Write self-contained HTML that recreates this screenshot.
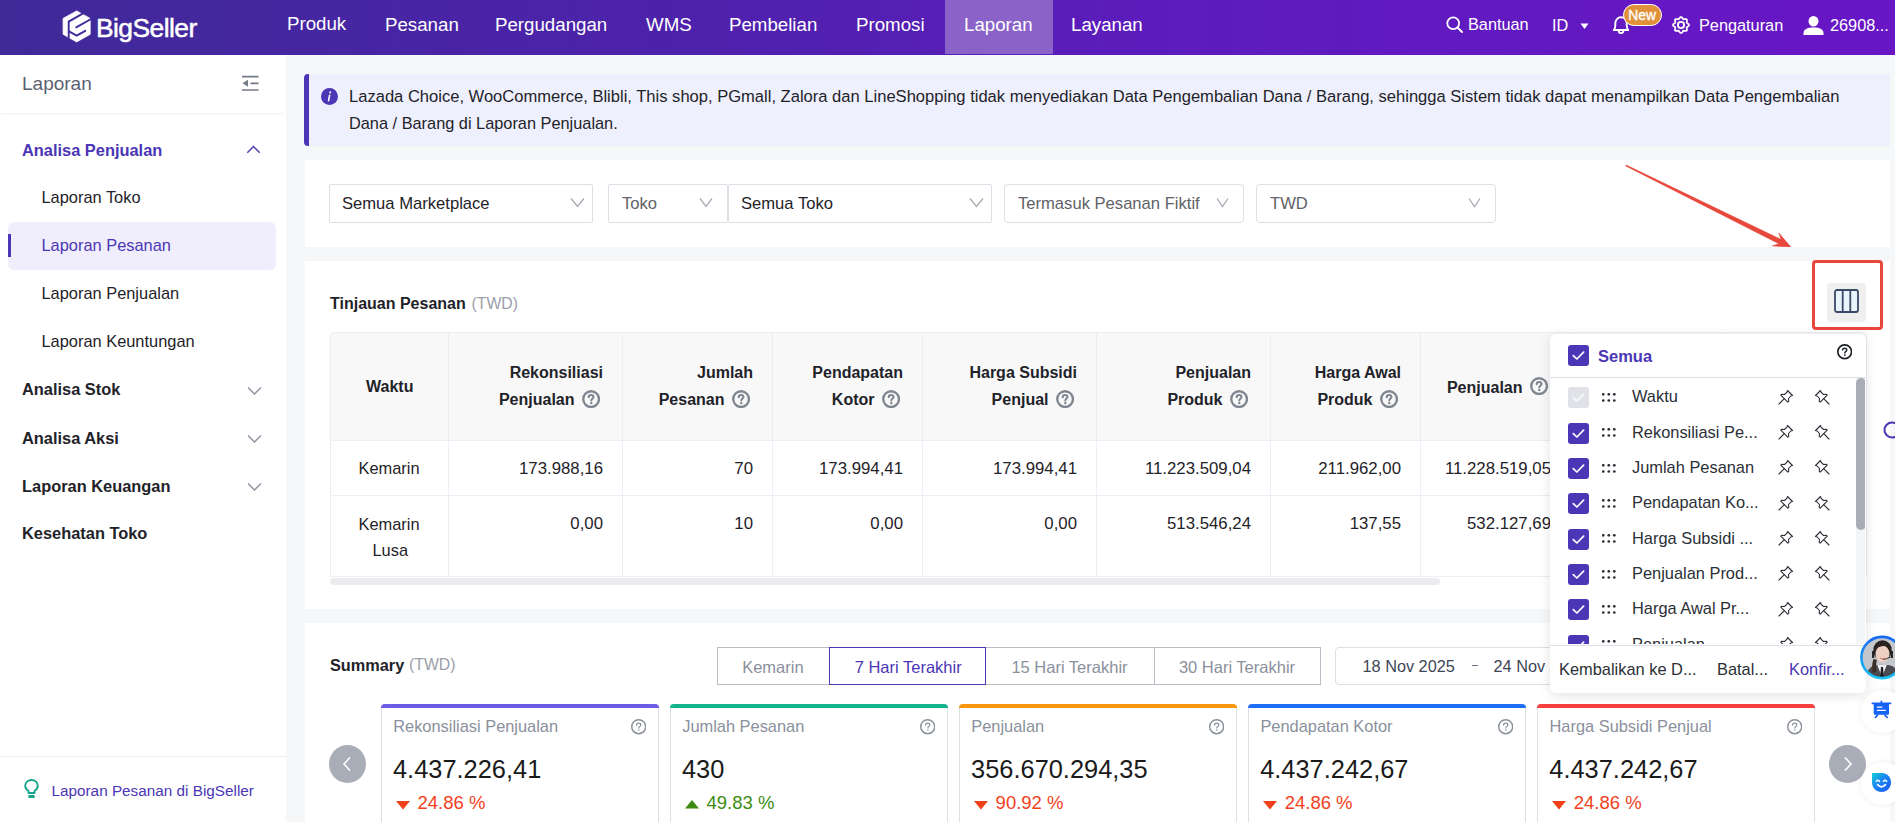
<!DOCTYPE html>
<html><head><meta charset="utf-8">
<style>
*{box-sizing:border-box;margin:0;padding:0}
html,body{width:1895px;height:822px;overflow:hidden}
body{position:relative;background:#f6f7f9;font-family:"Liberation Sans",sans-serif;color:#1f2329}
.a{position:absolute}
.t{position:absolute;line-height:1;white-space:nowrap}
#hdr{left:0;top:0;width:1895px;height:55px;background:linear-gradient(90deg,#3f2a98 0%,#4d22ab 35%,#5c1cbc 60%,#6816c6 100%)}
.nav{color:#fff;font-size:18.7px}
.hr{color:#fff;font-size:16.3px}
#side{left:0;top:55px;width:286px;height:767px;background:#fff}
.sb{font-weight:bold;font-size:16.4px;color:#1f2329}
.si{font-size:16.4px;color:#1f2329}
.panel{background:#fff}
.sel{position:absolute;border:1px solid #dcdfe6;border-radius:2px;background:#fff}
.selt{font-size:16.6px}
.chev{position:absolute}
.th{font-weight:bold;font-size:16px;color:#1f2329}
.td{font-size:16.8px;color:#1f2329}
.vl{position:absolute;width:1px;background:#ebeef5}
.hl{position:absolute;height:1px;background:#ebeef5}
.cb{position:absolute;width:21px;height:21px;border-radius:3px;background:#4b36b5}
.ddt{font-size:16.4px;color:#2b2f36}
.card{position:absolute;top:704px;width:278px;height:130px;border:1px solid #dcdfe6;border-top:none;border-radius:4px 4px 0 0;background:#fff}
.card .bar{position:absolute;left:-1px;right:-1px;top:0;height:4px;border-radius:4px 4px 0 0}
.cl{font-size:16.4px;color:#8a909c}
.cv{font-size:25.4px;color:#1a1a1a}
.cp{font-size:18.5px}
</style></head><body>

<!-- HEADER -->
<div id="hdr" class="a">
  <svg class="a" style="left:58px;top:6px" width="40" height="40" viewBox="0 0 40 40"><path d="M18.7 4.9 L32.2 12.4 L32.2 28.3 L18.7 35.9 L5.1 28.3 L5.1 12.4 Z" fill="#fff" stroke="#fff" stroke-width="0.8" stroke-linejoin="round"/><path d="M10.7 32 L10.7 15.6 L25.5 7.2" fill="none" stroke="#40299a" stroke-width="1.9"/><path d="M18.2 21.3 L34 12.5" fill="none" stroke="#40299a" stroke-width="1.9" stroke-linecap="round"/><path d="M11 25.4 L18.6 29.7 L27.3 24.8" fill="none" stroke="#40299a" stroke-width="1.9" stroke-linecap="round"/></svg>
  <div class="t" style="left:96px;top:15px;font-size:26.4px;color:#fff;letter-spacing:-0.55px;-webkit-text-stroke:0.5px #fff">BigSeller</div>
  <div class="t nav" style="left:287px;top:14.6px">Produk</div>
  <div class="t nav" style="left:385px;top:15.8px">Pesanan</div>
  <div class="t nav" style="left:495px;top:15.8px">Pergudangan</div>
  <div class="t nav" style="left:646px;top:15.8px">WMS</div>
  <div class="t nav" style="left:729px;top:15.8px">Pembelian</div>
  <div class="t nav" style="left:856px;top:15.8px">Promosi</div>
  <div class="a" style="left:945px;top:0;width:108px;height:54px;background:#8a62c8"></div>
  <div class="t nav" style="left:964px;top:15.8px">Laporan</div>
  <div class="t nav" style="left:1071px;top:15.8px">Layanan</div>
  <!-- right -->
  <svg class="a" style="left:1446px;top:16px" width="18" height="18" viewBox="0 0 18 18"><circle cx="7.2" cy="7.2" r="5.9" fill="none" stroke="#fff" stroke-width="1.8"/><path d="M11.5 11.5 L16 16" stroke="#fff" stroke-width="1.9" stroke-linecap="round"/></svg>
  <div class="t hr" style="left:1468px;top:16.4px">Bantuan</div>
  <div class="t hr" style="left:1552px;top:16.7px">ID</div>
  <svg class="a" style="left:1580px;top:23px" width="9" height="7" viewBox="0 0 9 7"><path d="M0.5 0.5 L8.5 0.5 L4.5 6 Z" fill="#fff"/></svg>
  <svg class="a" style="left:1612px;top:16px" width="19" height="20" viewBox="0 0 19 20"><path d="M1.8 14 C2.9 12.6 3.3 11.4 3.3 9.4 L3.3 7.6 C3.3 3.9 5.8 1.3 9 1.3 C12.2 1.3 14.7 3.9 14.7 7.6 L14.7 9.4 C14.7 11.4 15.1 12.6 16.2 14 Z" fill="none" stroke="#fff" stroke-width="1.9" stroke-linejoin="round"/><path d="M6.6 14.6 A2.4 2.6 0 0 0 11.4 14.6" fill="none" stroke="#fff" stroke-width="1.8"/></svg>
  <div class="a" style="left:1623px;top:4px;width:39px;height:22px;border-radius:11px;background:#e0913a;border:1px solid #fff"></div>
  <div class="t" style="left:1628.3px;top:9px;font-size:13.8px;color:#fff;-webkit-text-stroke:0.35px #fff">New</div>
  <svg class="a" style="left:1671px;top:15.3px" width="20" height="20" viewBox="0 0 20 20"><polygon points="17.95,10.00 17.90,10.31 17.76,10.61 17.55,10.89 17.27,11.15 16.96,11.39 16.65,11.60 16.35,11.79 16.10,11.98 15.90,12.18 15.77,12.39 15.71,12.63 15.71,12.91 15.76,13.23 15.83,13.57 15.90,13.94 15.96,14.33 15.97,14.70 15.92,15.06 15.81,15.37 15.62,15.62 15.37,15.81 15.06,15.92 14.70,15.97 14.33,15.96 13.94,15.90 13.57,15.83 13.23,15.76 12.91,15.71 12.63,15.71 12.39,15.77 12.18,15.90 11.98,16.10 11.79,16.35 11.60,16.65 11.39,16.96 11.15,17.27 10.89,17.55 10.61,17.76 10.31,17.90 10.00,17.95 9.69,17.90 9.39,17.76 9.11,17.55 8.85,17.27 8.61,16.96 8.40,16.65 8.21,16.35 8.02,16.10 7.82,15.90 7.61,15.77 7.37,15.71 7.09,15.71 6.77,15.76 6.43,15.83 6.06,15.90 5.67,15.96 5.30,15.97 4.94,15.92 4.63,15.81 4.38,15.62 4.19,15.37 4.08,15.06 4.03,14.70 4.04,14.33 4.10,13.94 4.17,13.57 4.24,13.23 4.29,12.91 4.29,12.63 4.23,12.39 4.10,12.18 3.90,11.98 3.65,11.79 3.35,11.60 3.04,11.39 2.73,11.15 2.45,10.89 2.24,10.61 2.10,10.31 2.05,10.00 2.10,9.69 2.24,9.39 2.45,9.11 2.73,8.85 3.04,8.61 3.35,8.40 3.65,8.21 3.90,8.02 4.10,7.82 4.23,7.61 4.29,7.37 4.29,7.09 4.24,6.77 4.17,6.43 4.10,6.06 4.04,5.67 4.03,5.30 4.08,4.94 4.19,4.63 4.38,4.38 4.63,4.19 4.94,4.08 5.30,4.03 5.67,4.04 6.06,4.10 6.43,4.17 6.77,4.24 7.09,4.29 7.37,4.29 7.61,4.23 7.82,4.10 8.02,3.90 8.21,3.65 8.40,3.35 8.61,3.04 8.85,2.73 9.11,2.45 9.39,2.24 9.69,2.10 10.00,2.05 10.31,2.10 10.61,2.24 10.89,2.45 11.15,2.73 11.39,3.04 11.60,3.35 11.79,3.65 11.98,3.90 12.18,4.10 12.39,4.23 12.63,4.29 12.91,4.29 13.23,4.24 13.57,4.17 13.94,4.10 14.33,4.04 14.70,4.03 15.06,4.08 15.37,4.19 15.62,4.38 15.81,4.63 15.92,4.94 15.97,5.30 15.96,5.67 15.90,6.06 15.83,6.43 15.76,6.77 15.71,7.09 15.71,7.37 15.77,7.61 15.90,7.82 16.10,8.02 16.35,8.21 16.65,8.40 16.96,8.61 17.27,8.85 17.55,9.11 17.76,9.39 17.90,9.69 17.95,10.00" fill="none" stroke="#fff" stroke-width="1.8" stroke-linejoin="round"/><circle cx="10" cy="10" r="3.1" fill="none" stroke="#fff" stroke-width="1.9"/></svg>
  <div class="t hr" style="left:1699px;top:17px">Pengaturan</div>
  <svg class="a" style="left:1803px;top:16px" width="21" height="19" viewBox="0 0 21 19"><ellipse cx="10.5" cy="5.3" rx="5" ry="5.3" fill="#fff"/><path d="M0.5 19 L0.5 17 C0.5 13.5 4 11.5 10.5 11.5 C17 11.5 20.5 13.5 20.5 17 L20.5 19 Z" fill="#fff"/></svg>
  <div class="t hr" style="left:1830px;top:17px">26908...</div>
</div>

<!-- SIDEBAR -->
<div id="side" class="a">
  <div class="a" style="left:0;top:0;width:286px;height:58px;background:#fff;border-radius:0 0 4px 0;box-shadow:0 1px 2px rgba(0,0,0,0.06)"></div>
</div>
<div class="t" style="left:22px;top:73.5px;font-size:19px;color:#5a6270">Laporan</div>
<svg class="a" style="left:241px;top:75px" width="19" height="17" viewBox="0 0 19 17"><path d="M1 1.6 H17.5 M9.5 8.3 H17.5 M1 15 H17.5" stroke="#737a88" stroke-width="1.7"/><path d="M1.5 8.3 L7 4.8 L7 11.8 Z" fill="#737a88"/></svg>

<div class="t sb" style="left:22px;top:141.5px;color:#4b36b5">Analisa Penjualan</div>
<svg class="a" style="left:246px;top:145px" width="15" height="9" viewBox="0 0 15 9"><path d="M1.3 7.8 L7.5 1.5 L13.7 7.8" fill="none" stroke="#4b36b5" stroke-width="1.4"/></svg>
<div class="t si" style="left:41.5px;top:189px">Laporan Toko</div>
<div class="a" style="left:8px;top:222px;width:268px;height:48px;border-radius:6px;background:#f0eefc"></div>
<div class="a" style="left:8px;top:234px;width:3px;height:23px;background:#4b36b5"></div>
<div class="t si" style="left:41.5px;top:237.4px;color:#4b36b5">Laporan Pesanan</div>
<div class="t si" style="left:41.5px;top:285px">Laporan Penjualan</div>
<div class="t si" style="left:41.5px;top:332.7px">Laporan Keuntungan</div>
<div class="t sb" style="left:22px;top:380.8px">Analisa Stok</div>
<div class="t sb" style="left:22px;top:429.5px">Analisa Aksi</div>
<div class="t sb" style="left:22px;top:477.7px">Laporan Keuangan</div>
<div class="t sb" style="left:22px;top:525.3px">Kesehatan Toko</div>
<svg class="a" style="left:247px;top:386px" width="15" height="9" viewBox="0 0 15 9"><path d="M1 1.5 L7.5 8 L14 1.5" fill="none" stroke="#8a909c" stroke-width="1.3"/></svg>
<svg class="a" style="left:247px;top:434px" width="15" height="9" viewBox="0 0 15 9"><path d="M1 1.5 L7.5 8 L14 1.5" fill="none" stroke="#8a909c" stroke-width="1.3"/></svg>
<svg class="a" style="left:247px;top:482px" width="15" height="9" viewBox="0 0 15 9"><path d="M1 1.5 L7.5 8 L14 1.5" fill="none" stroke="#8a909c" stroke-width="1.3"/></svg>
<div class="a" style="left:0;top:755.5px;width:286px;height:1px;background:#eceef2"></div>
<svg class="a" style="left:24px;top:779px" width="15" height="20" viewBox="0 0 15 20"><path d="M4.5 14 L4.5 12 C2.5 10.8 1.2 8.8 1.2 6.8 C1.2 3.5 4 1 7.5 1 C11 1 13.8 3.5 13.8 6.8 C13.8 8.8 12.5 10.8 10.5 12 L10.5 14 Z" fill="none" stroke="#16a58b" stroke-width="1.9" stroke-linejoin="round"/><rect x="4.3" y="16" width="6.4" height="3" rx="0.8" fill="#16a58b"/></svg>
<div class="t" style="left:51.5px;top:783.4px;font-size:15.3px;color:#4b36b5">Laporan Pesanan di BigSeller</div>

<!-- MAIN -->
<!-- banner -->
<div class="a" style="left:304px;top:74px;width:1586px;height:72px;background:#eef0fd;border-radius:4px 0 0 4px;border-left:5px solid #4b36b5"></div>
<svg class="a" style="left:321px;top:88px" width="17" height="17" viewBox="0 0 17 17"><circle cx="8.5" cy="8.5" r="8.5" fill="#4b36b5"/><path d="M9.2 4.2 L9.2 4.6" stroke="#fff" stroke-width="1.8" stroke-linecap="round"/><path d="M8.6 7.2 L7.6 12.6" stroke="#fff" stroke-width="1.6" stroke-linecap="round"/></svg>
<div class="t" style="left:349px;top:89px;font-size:16.56px;color:#1f2329">Lazada Choice, WooCommerce, Blibli, This shop, PGmall, Zalora dan LineShopping tidak menyediakan Data Pengembalian Dana / Barang, sehingga Sistem tidak dapat menampilkan Data Pengembalian</div>
<div class="t" style="left:349px;top:115.2px;font-size:16.33px;color:#1f2329">Dana / Barang di Laporan Penjualan.</div>

<!-- filter panel -->
<div class="a panel" style="left:305px;top:160px;width:1585px;height:87px;overflow:hidden">
  <svg class="a" style="left:0;top:0" width="1585" height="87"><polygon points="1320.8,5.9 1474.0,83.8 1467.4,85.9 1485.8,87.0 1473.8,73.0 1476.1,79.5 1321.2,5.1" fill="#e8473b" stroke="#e8473b" stroke-width="0.6" stroke-linejoin="round"/></svg>
</div>
<div class="sel" style="left:329px;top:184px;width:264px;height:39px"></div>
<div class="t selt" style="left:342px;top:196px">Semua Marketplace</div>
<div class="sel" style="left:608px;top:184px;width:120px;height:39px"></div>
<div class="t selt" style="left:622px;top:196px;color:#606266">Toko</div>
<div class="sel" style="left:728px;top:184px;width:264px;height:39px"></div>
<div class="t selt" style="left:741px;top:196px">Semua Toko</div>
<div class="sel" style="left:1004px;top:184px;width:240px;height:39px;border-radius:4px"></div>
<div class="t selt" style="left:1018px;top:196px;color:#606266">Termasuk Pesanan Fiktif</div>
<div class="sel" style="left:1256px;top:184px;width:240px;height:39px;border-radius:4px"></div>
<div class="t selt" style="left:1270px;top:196px;color:#606266">TWD</div>
<svg class="chev" style="left:570px;top:197px" width="15" height="11" viewBox="0 0 15 11"><path d="M1 1.5 L7.5 9.5 L14 1.5" fill="none" stroke="#a8abb2" stroke-width="1.3"/></svg>
<svg class="chev" style="left:699px;top:197px" width="14" height="11" viewBox="0 0 14 11"><path d="M1 1.5 L7 9.5 L13 1.5" fill="none" stroke="#a8abb2" stroke-width="1.3"/></svg>
<svg class="chev" style="left:969px;top:197px" width="15" height="11" viewBox="0 0 15 11"><path d="M1 1.5 L7.5 9.5 L14 1.5" fill="none" stroke="#a8abb2" stroke-width="1.3"/></svg>
<svg class="chev" style="left:1216px;top:197px" width="13" height="11" viewBox="0 0 13 11"><path d="M1 1.5 L6.5 9.5 L12 1.5" fill="none" stroke="#a8abb2" stroke-width="1.3"/></svg>
<svg class="chev" style="left:1468px;top:197px" width="13" height="11" viewBox="0 0 13 11"><path d="M1 1.5 L6.5 9.5 L12 1.5" fill="none" stroke="#a8abb2" stroke-width="1.3"/></svg>

<!-- TABLE PANEL -->
<div class="a panel" style="left:305px;top:261px;width:1585px;height:348px"></div>
<div class="t th" style="left:330px;top:295.6px">Tinjauan Pesanan</div>
<div class="t" style="left:471.5px;top:296px;font-size:15.8px;color:#9aa0aa">(TWD)</div>
<div class="a" style="left:329.5px;top:332px;width:1537px;height:245px;border:1px solid #ebeef5;border-radius:4px 4px 0 0;overflow:hidden"><div class="a" style="left:0;top:0;width:100%;height:108px;background:#f8f8f9"></div></div>
<div class="hl" style="left:330px;top:440px;width:1536px"></div>
<div class="hl" style="left:330px;top:495px;width:1536px"></div>
<div class="hl" style="left:330px;top:576px;width:1536px"></div>
<div class="vl" style="left:448px;top:333px;height:243px"></div>
<div class="vl" style="left:622px;top:333px;height:243px"></div>
<div class="vl" style="left:772px;top:333px;height:243px"></div>
<div class="vl" style="left:922px;top:333px;height:243px"></div>
<div class="vl" style="left:1096px;top:333px;height:243px"></div>
<div class="vl" style="left:1270px;top:333px;height:243px"></div>
<div class="vl" style="left:1420px;top:333px;height:243px"></div>
<div class="vl" style="left:1570px;top:333px;height:243px"></div>
<div class="vl" style="left:1720px;top:333px;height:243px"></div>
<div class="a" style="left:330px;top:577.5px;width:1110px;height:7px;border-radius:4px;background:#ececee"></div>
<div class="t th" style="left:366px;top:378.5px">Waktu</div>
<div class="t th" style="right:1292px;top:365.1px;">Rekonsiliasi</div>
<div class="t th" style="right:1320.5px;top:392.4px;">Penjualan</div>
<svg class="a" style="left:581.60px;top:390.20px" width="18.2" height="18.2" viewBox="0 0 20 20"><circle cx="10" cy="10" r="8.65" fill="none" stroke="#80868f" stroke-width="2.6"/><path d="M7.4 7.9 C7.4 6.3 8.6 5.5 10 5.5 C11.5 5.5 12.6 6.4 12.6 7.8 C12.6 9.5 10.2 9.7 10.2 11.4" fill="none" stroke="#80868f" stroke-width="2.3" stroke-linecap="round"/><circle cx="10.2" cy="14.3" r="1.35" fill="#80868f"/></svg>
<div class="t th" style="right:1142px;top:365.1px;">Jumlah</div>
<div class="t th" style="right:1170.5px;top:392.4px;">Pesanan</div>
<svg class="a" style="left:731.60px;top:390.20px" width="18.2" height="18.2" viewBox="0 0 20 20"><circle cx="10" cy="10" r="8.65" fill="none" stroke="#80868f" stroke-width="2.6"/><path d="M7.4 7.9 C7.4 6.3 8.6 5.5 10 5.5 C11.5 5.5 12.6 6.4 12.6 7.8 C12.6 9.5 10.2 9.7 10.2 11.4" fill="none" stroke="#80868f" stroke-width="2.3" stroke-linecap="round"/><circle cx="10.2" cy="14.3" r="1.35" fill="#80868f"/></svg>
<div class="t th" style="right:992px;top:365.1px;">Pendapatan</div>
<div class="t th" style="right:1020.5px;top:392.4px;">Kotor</div>
<svg class="a" style="left:881.60px;top:390.20px" width="18.2" height="18.2" viewBox="0 0 20 20"><circle cx="10" cy="10" r="8.65" fill="none" stroke="#80868f" stroke-width="2.6"/><path d="M7.4 7.9 C7.4 6.3 8.6 5.5 10 5.5 C11.5 5.5 12.6 6.4 12.6 7.8 C12.6 9.5 10.2 9.7 10.2 11.4" fill="none" stroke="#80868f" stroke-width="2.3" stroke-linecap="round"/><circle cx="10.2" cy="14.3" r="1.35" fill="#80868f"/></svg>
<div class="t th" style="right:818px;top:365.1px;">Harga Subsidi</div>
<div class="t th" style="right:846.5px;top:392.4px;">Penjual</div>
<svg class="a" style="left:1055.60px;top:390.20px" width="18.2" height="18.2" viewBox="0 0 20 20"><circle cx="10" cy="10" r="8.65" fill="none" stroke="#80868f" stroke-width="2.6"/><path d="M7.4 7.9 C7.4 6.3 8.6 5.5 10 5.5 C11.5 5.5 12.6 6.4 12.6 7.8 C12.6 9.5 10.2 9.7 10.2 11.4" fill="none" stroke="#80868f" stroke-width="2.3" stroke-linecap="round"/><circle cx="10.2" cy="14.3" r="1.35" fill="#80868f"/></svg>
<div class="t th" style="right:644px;top:365.1px;">Penjualan</div>
<div class="t th" style="right:672.5px;top:392.4px;">Produk</div>
<svg class="a" style="left:1229.60px;top:390.20px" width="18.2" height="18.2" viewBox="0 0 20 20"><circle cx="10" cy="10" r="8.65" fill="none" stroke="#80868f" stroke-width="2.6"/><path d="M7.4 7.9 C7.4 6.3 8.6 5.5 10 5.5 C11.5 5.5 12.6 6.4 12.6 7.8 C12.6 9.5 10.2 9.7 10.2 11.4" fill="none" stroke="#80868f" stroke-width="2.3" stroke-linecap="round"/><circle cx="10.2" cy="14.3" r="1.35" fill="#80868f"/></svg>
<div class="t th" style="right:494px;top:365.1px;">Harga Awal</div>
<div class="t th" style="right:522.5px;top:392.4px;">Produk</div>
<svg class="a" style="left:1379.60px;top:390.20px" width="18.2" height="18.2" viewBox="0 0 20 20"><circle cx="10" cy="10" r="8.65" fill="none" stroke="#80868f" stroke-width="2.6"/><path d="M7.4 7.9 C7.4 6.3 8.6 5.5 10 5.5 C11.5 5.5 12.6 6.4 12.6 7.8 C12.6 9.5 10.2 9.7 10.2 11.4" fill="none" stroke="#80868f" stroke-width="2.3" stroke-linecap="round"/><circle cx="10.2" cy="14.3" r="1.35" fill="#80868f"/></svg>
<div class="t th" style="right:372.5px;top:379.5px;">Penjualan</div>
<svg class="a" style="left:1529.60px;top:376.70px" width="18.2" height="18.2" viewBox="0 0 20 20"><circle cx="10" cy="10" r="8.65" fill="none" stroke="#80868f" stroke-width="2.6"/><path d="M7.4 7.9 C7.4 6.3 8.6 5.5 10 5.5 C11.5 5.5 12.6 6.4 12.6 7.8 C12.6 9.5 10.2 9.7 10.2 11.4" fill="none" stroke="#80868f" stroke-width="2.3" stroke-linecap="round"/><circle cx="10.2" cy="14.3" r="1.35" fill="#80868f"/></svg>
<div class="t td" style="left:358.5px;top:459.5px;font-size:16.4px">Kemarin</div>
<div class="t td" style="left:358.5px;top:515.5px;font-size:16.4px">Kemarin</div>
<div class="t td" style="left:372.5px;top:542px;font-size:16.4px">Lusa</div>
<div class="t td" style="right:1292px;top:461px;">173.988,16</div>
<div class="t td" style="right:1292px;top:516.3px;">0,00</div>
<div class="t td" style="right:1142px;top:461px;">70</div>
<div class="t td" style="right:1142px;top:516.3px;">10</div>
<div class="t td" style="right:992px;top:461px;">173.994,41</div>
<div class="t td" style="right:992px;top:516.3px;">0,00</div>
<div class="t td" style="right:818px;top:461px;">173.994,41</div>
<div class="t td" style="right:818px;top:516.3px;">0,00</div>
<div class="t td" style="right:644px;top:461px;">11.223.509,04</div>
<div class="t td" style="right:644px;top:516.3px;">513.546,24</div>
<div class="t td" style="right:494px;top:461px;">211.962,00</div>
<div class="t td" style="right:494px;top:516.3px;">137,55</div>
<div class="t td" style="right:344px;top:461px;">11.228.519,05</div>
<div class="t td" style="right:344px;top:516.3px;">532.127,69</div>
<div class="a" style="left:1812px;top:260px;width:71px;height:70px;border:3px solid #e8473b;border-radius:4px"></div>
<div class="a" style="left:1827px;top:283px;width:39px;height:39px;border-radius:4px;background:#efefef"></div>
<svg class="a" style="left:1834px;top:289px" width="25" height="24" viewBox="0 0 25 24"><rect x="1" y="1" width="23" height="22" rx="2" fill="#e8f3fb" stroke="#3b4866" stroke-width="1.8"/><path d="M8.7 1 V23 M16.3 1 V23" stroke="#3b4866" stroke-width="1.8"/></svg>
<!-- SUMMARY -->
<div class="a panel" style="left:305px;top:623px;width:1585px;height:199px"></div>
<div class="t th" style="left:330px;top:657.1px;font-size:16.3px">Summary</div>
<div class="t" style="left:409px;top:657.4px;font-size:15.8px;color:#9aa0aa">(TWD)</div>
<div class="a" style="left:717px;top:647px;width:604px;height:38px;border:1px solid #b9bdc6"></div>
<div class="vl" style="left:1153.5px;top:647px;height:38px;background:#b9bdc6"></div>
<div class="a" style="left:829px;top:647px;width:157px;height:38px;border:1px solid #4b36b5"></div>
<div class="t" style="left:742.2px;top:659px;font-size:16.5px;color:#8a909c">Kemarin</div>
<div class="t" style="left:854.7px;top:659px;font-size:16.5px;color:#4b36b5">7 Hari Terakhir</div>
<div class="t" style="left:1011.4px;top:659px;font-size:16.5px;color:#8a909c">15 Hari Terakhir</div>
<div class="t" style="left:1178.9px;top:659px;font-size:16.5px;color:#8a909c">30 Hari Terakhir</div>
<div class="a" style="left:1335px;top:647px;width:300px;height:38px;border:1px solid #dcdfe6;border-radius:4px;background:#fff"></div>
<div class="t" style="left:1362.5px;top:658.3px;font-size:16.3px;color:#3d4655">18 Nov 2025</div>
<div class="a" style="left:1471.5px;top:664.8px;width:6px;height:1.6px;background:#6b7280"></div>
<div class="t" style="left:1493.5px;top:658.3px;font-size:16.3px;color:#3d4655">24 Nov 2025</div>
<div class="a" style="left:329px;top:744.5px;width:37px;height:38px;border-radius:50%;background:#a9adb8"></div>
<svg class="a" style="left:329px;top:744.5px" width="37" height="38" viewBox="0 0 37 38"><path d="M21 12.5 L15 19 L21 25.5" fill="none" stroke="#fff" stroke-width="1.6"/></svg>
<div class="a" style="left:1829px;top:744.5px;width:37px;height:38px;border-radius:50%;background:#a9adb8"></div>
<svg class="a" style="left:1829px;top:744.5px" width="37" height="38" viewBox="0 0 37 38"><path d="M16 12.5 L22 19 L16 25.5" fill="none" stroke="#fff" stroke-width="1.6"/></svg>
<div class="card" style="left:380.5px"><div class="bar" style="background:#6c5ce7"></div></div>
<div class="t cl" style="left:393.2px;top:718.4px">Rekonsiliasi Penjualan</div>
<svg class="a" style="left:630.70px;top:719.20px" width="15.4" height="15.4" viewBox="0 0 20 20"><circle cx="10" cy="10" r="9.06" fill="none" stroke="#8a909c" stroke-width="1.88"/><path d="M7.3 7.8 C7.3 6.2 8.5 5.4 10 5.4 C11.6 5.4 12.7 6.3 12.7 7.7 C12.7 9.5 10.2 9.7 10.2 11.6" fill="none" stroke="#8a909c" stroke-width="1.62" stroke-linecap="round"/><circle cx="10.2" cy="14.4" r="0.97" fill="#8a909c"/></svg>
<div class="t cv" style="left:393.0px;top:756.8px">4.437.226,41</div>
<svg class="a" style="left:395.9px;top:801px" width="14" height="9" viewBox="0 0 14 9"><path d="M0 0 H14 L7 8.5 Z" fill="#f2401a"/></svg>
<div class="t cp" style="left:417.5px;top:794.2px;color:#f2401a">24.86 %</div>
<div class="card" style="left:669.5px"><div class="bar" style="background:#14b38b"></div></div>
<div class="t cl" style="left:682.2px;top:718.4px">Jumlah Pesanan</div>
<svg class="a" style="left:919.70px;top:719.20px" width="15.4" height="15.4" viewBox="0 0 20 20"><circle cx="10" cy="10" r="9.06" fill="none" stroke="#8a909c" stroke-width="1.88"/><path d="M7.3 7.8 C7.3 6.2 8.5 5.4 10 5.4 C11.6 5.4 12.7 6.3 12.7 7.7 C12.7 9.5 10.2 9.7 10.2 11.6" fill="none" stroke="#8a909c" stroke-width="1.62" stroke-linecap="round"/><circle cx="10.2" cy="14.4" r="0.97" fill="#8a909c"/></svg>
<div class="t cv" style="left:682.0px;top:756.8px">430</div>
<svg class="a" style="left:684.9px;top:800px" width="14" height="9" viewBox="0 0 14 9"><path d="M0 8.5 H14 L7 0 Z" fill="#3c8c12"/></svg>
<div class="t cp" style="left:706.5px;top:794.2px;color:#3c8c12">49.83 %</div>
<div class="card" style="left:958.6px"><div class="bar" style="background:#fa960f"></div></div>
<div class="t cl" style="left:971.3000000000001px;top:718.4px">Penjualan</div>
<svg class="a" style="left:1208.80px;top:719.20px" width="15.4" height="15.4" viewBox="0 0 20 20"><circle cx="10" cy="10" r="9.06" fill="none" stroke="#8a909c" stroke-width="1.88"/><path d="M7.3 7.8 C7.3 6.2 8.5 5.4 10 5.4 C11.6 5.4 12.7 6.3 12.7 7.7 C12.7 9.5 10.2 9.7 10.2 11.6" fill="none" stroke="#8a909c" stroke-width="1.62" stroke-linecap="round"/><circle cx="10.2" cy="14.4" r="0.97" fill="#8a909c"/></svg>
<div class="t cv" style="left:971.1px;top:756.8px">356.670.294,35</div>
<svg class="a" style="left:974.0px;top:801px" width="14" height="9" viewBox="0 0 14 9"><path d="M0 0 H14 L7 8.5 Z" fill="#f2401a"/></svg>
<div class="t cp" style="left:995.6px;top:794.2px;color:#f2401a">90.92 %</div>
<div class="card" style="left:1247.7px"><div class="bar" style="background:#1f6ff5"></div></div>
<div class="t cl" style="left:1260.4px;top:718.4px">Pendapatan Kotor</div>
<svg class="a" style="left:1497.90px;top:719.20px" width="15.4" height="15.4" viewBox="0 0 20 20"><circle cx="10" cy="10" r="9.06" fill="none" stroke="#8a909c" stroke-width="1.88"/><path d="M7.3 7.8 C7.3 6.2 8.5 5.4 10 5.4 C11.6 5.4 12.7 6.3 12.7 7.7 C12.7 9.5 10.2 9.7 10.2 11.6" fill="none" stroke="#8a909c" stroke-width="1.62" stroke-linecap="round"/><circle cx="10.2" cy="14.4" r="0.97" fill="#8a909c"/></svg>
<div class="t cv" style="left:1260.2px;top:756.8px">4.437.242,67</div>
<svg class="a" style="left:1263.1000000000001px;top:801px" width="14" height="9" viewBox="0 0 14 9"><path d="M0 0 H14 L7 8.5 Z" fill="#f2401a"/></svg>
<div class="t cp" style="left:1284.7px;top:794.2px;color:#f2401a">24.86 %</div>
<div class="card" style="left:1536.8px"><div class="bar" style="background:#f5403f"></div></div>
<div class="t cl" style="left:1549.5px;top:718.4px">Harga Subsidi Penjual</div>
<svg class="a" style="left:1787.00px;top:719.20px" width="15.4" height="15.4" viewBox="0 0 20 20"><circle cx="10" cy="10" r="9.06" fill="none" stroke="#8a909c" stroke-width="1.88"/><path d="M7.3 7.8 C7.3 6.2 8.5 5.4 10 5.4 C11.6 5.4 12.7 6.3 12.7 7.7 C12.7 9.5 10.2 9.7 10.2 11.6" fill="none" stroke="#8a909c" stroke-width="1.62" stroke-linecap="round"/><circle cx="10.2" cy="14.4" r="0.97" fill="#8a909c"/></svg>
<div class="t cv" style="left:1549.3px;top:756.8px">4.437.242,67</div>
<svg class="a" style="left:1552.2px;top:801px" width="14" height="9" viewBox="0 0 14 9"><path d="M0 0 H14 L7 8.5 Z" fill="#f2401a"/></svg>
<div class="t cp" style="left:1573.8px;top:794.2px;color:#f2401a">24.86 %</div>
<div style="position:absolute;left:0;top:0;z-index:10">
<!-- DROPDOWN -->
<div class="a" style="left:1549.5px;top:333.5px;width:316px;height:359px;background:#fff;border-radius:6px;box-shadow:0 2px 12px rgba(0,0,0,0.12)"></div>
<div class="cb" style="left:1567.5px;top:345px;background:#4b36b5"></div><svg class="a" style="left:1567.5px;top:345px" width="21" height="21" viewBox="0 0 21 21"><path d="M5.3 10.6 L8.9 14 L15.6 7.2" fill="none" stroke="#fff" stroke-width="1.7" stroke-linecap="round" stroke-linejoin="round"/></svg>
<div class="t" style="left:1598px;top:348.1px;font-size:16.5px;font-weight:bold;color:#4b36b5">Semua</div>
<svg class="a" style="left:1836.70px;top:344.30px" width="15.4" height="15.4" viewBox="0 0 20 20"><circle cx="10" cy="10" r="8.90" fill="none" stroke="#1f2329" stroke-width="2.21"/><path d="M7.3 7.8 C7.3 6.2 8.5 5.4 10 5.4 C11.6 5.4 12.7 6.3 12.7 7.7 C12.7 9.5 10.2 9.7 10.2 11.6" fill="none" stroke="#1f2329" stroke-width="1.90" stroke-linecap="round"/><circle cx="10.2" cy="14.4" r="1.14" fill="#1f2329"/></svg>
<div class="a" style="left:1549.5px;top:377px;width:316px;height:1px;background:#dcdfe6"></div>
<div class="a" style="left:1550px;top:378px;width:315px;height:266px;overflow:hidden"><div class="cb" style="left:17.5px;top:9.199999999999989px;background:#e0e2e7"></div><svg class="a" style="left:17.5px;top:9.199999999999989px" width="21" height="21" viewBox="0 0 21 21"><path d="M5.3 10.6 L8.9 14 L15.6 7.2" fill="none" stroke="#f4f5f7" stroke-width="2" stroke-linecap="round" stroke-linejoin="round"/></svg><svg class="a" style="left:51.5px;top:14.99999999999999px" width="15" height="9" viewBox="0 0 15 9"><circle cx="1.3" cy="1.3" r="1.35" fill="#2b2f36"/><circle cx="1.3" cy="7.5" r="1.35" fill="#2b2f36"/><circle cx="6.8" cy="1.3" r="1.35" fill="#2b2f36"/><circle cx="6.8" cy="7.5" r="1.35" fill="#2b2f36"/><circle cx="12.3" cy="1.3" r="1.35" fill="#2b2f36"/><circle cx="12.3" cy="7.5" r="1.35" fill="#2b2f36"/></svg><div class="t ddt" style="left:82px;top:10.399999999999988px">Waktu</div><svg class="a" style="left:228px;top:10.70px" width="16" height="16" viewBox="0 0 16 16"><path d="M9.5 1.5 L14.5 6.5 L12.8 7 L10.5 9.5 L10.8 12.2 L9.8 13.2 L2.8 6.2 L3.8 5.2 L6.5 5.5 L9 3.2 Z" fill="none" stroke="#2b2f36" stroke-width="1.1" stroke-linejoin="round"/><path d="M6.3 9.7 L1 15" stroke="#2b2f36" stroke-width="1.1" stroke-linecap="round"/></svg><svg class="a" style="left:263.5px;top:10.70px" width="16" height="16" viewBox="0 0 16 16" ><g transform="translate(16,0) scale(-1,1)"><path d="M9.5 1.5 L14.5 6.5 L12.8 7 L10.5 9.5 L10.8 12.2 L9.8 13.2 L2.8 6.2 L3.8 5.2 L6.5 5.5 L9 3.2 Z" fill="none" stroke="#2b2f36" stroke-width="1.1" stroke-linejoin="round"/><path d="M6.3 9.7 L1 15" stroke="#2b2f36" stroke-width="1.1" stroke-linecap="round"/></g></svg><div class="cb" style="left:17.5px;top:44.52999999999997px;background:#4b36b5"></div><svg class="a" style="left:17.5px;top:44.52999999999997px" width="21" height="21" viewBox="0 0 21 21"><path d="M5.3 10.6 L8.9 14 L15.6 7.2" fill="none" stroke="#fff" stroke-width="1.7" stroke-linecap="round" stroke-linejoin="round"/></svg><svg class="a" style="left:51.5px;top:50.32999999999997px" width="15" height="9" viewBox="0 0 15 9"><circle cx="1.3" cy="1.3" r="1.35" fill="#2b2f36"/><circle cx="1.3" cy="7.5" r="1.35" fill="#2b2f36"/><circle cx="6.8" cy="1.3" r="1.35" fill="#2b2f36"/><circle cx="6.8" cy="7.5" r="1.35" fill="#2b2f36"/><circle cx="12.3" cy="1.3" r="1.35" fill="#2b2f36"/><circle cx="12.3" cy="7.5" r="1.35" fill="#2b2f36"/></svg><div class="t ddt" style="left:82px;top:45.729999999999976px">Rekonsiliasi Pe...</div><svg class="a" style="left:228px;top:46.03px" width="16" height="16" viewBox="0 0 16 16"><path d="M9.5 1.5 L14.5 6.5 L12.8 7 L10.5 9.5 L10.8 12.2 L9.8 13.2 L2.8 6.2 L3.8 5.2 L6.5 5.5 L9 3.2 Z" fill="none" stroke="#2b2f36" stroke-width="1.1" stroke-linejoin="round"/><path d="M6.3 9.7 L1 15" stroke="#2b2f36" stroke-width="1.1" stroke-linecap="round"/></svg><svg class="a" style="left:263.5px;top:46.03px" width="16" height="16" viewBox="0 0 16 16" ><g transform="translate(16,0) scale(-1,1)"><path d="M9.5 1.5 L14.5 6.5 L12.8 7 L10.5 9.5 L10.8 12.2 L9.8 13.2 L2.8 6.2 L3.8 5.2 L6.5 5.5 L9 3.2 Z" fill="none" stroke="#2b2f36" stroke-width="1.1" stroke-linejoin="round"/><path d="M6.3 9.7 L1 15" stroke="#2b2f36" stroke-width="1.1" stroke-linecap="round"/></g></svg><div class="cb" style="left:17.5px;top:79.86000000000001px;background:#4b36b5"></div><svg class="a" style="left:17.5px;top:79.86000000000001px" width="21" height="21" viewBox="0 0 21 21"><path d="M5.3 10.6 L8.9 14 L15.6 7.2" fill="none" stroke="#fff" stroke-width="1.7" stroke-linecap="round" stroke-linejoin="round"/></svg><svg class="a" style="left:51.5px;top:85.66000000000001px" width="15" height="9" viewBox="0 0 15 9"><circle cx="1.3" cy="1.3" r="1.35" fill="#2b2f36"/><circle cx="1.3" cy="7.5" r="1.35" fill="#2b2f36"/><circle cx="6.8" cy="1.3" r="1.35" fill="#2b2f36"/><circle cx="6.8" cy="7.5" r="1.35" fill="#2b2f36"/><circle cx="12.3" cy="1.3" r="1.35" fill="#2b2f36"/><circle cx="12.3" cy="7.5" r="1.35" fill="#2b2f36"/></svg><div class="t ddt" style="left:82px;top:81.06000000000002px">Jumlah Pesanan</div><svg class="a" style="left:228px;top:81.36px" width="16" height="16" viewBox="0 0 16 16"><path d="M9.5 1.5 L14.5 6.5 L12.8 7 L10.5 9.5 L10.8 12.2 L9.8 13.2 L2.8 6.2 L3.8 5.2 L6.5 5.5 L9 3.2 Z" fill="none" stroke="#2b2f36" stroke-width="1.1" stroke-linejoin="round"/><path d="M6.3 9.7 L1 15" stroke="#2b2f36" stroke-width="1.1" stroke-linecap="round"/></svg><svg class="a" style="left:263.5px;top:81.36px" width="16" height="16" viewBox="0 0 16 16" ><g transform="translate(16,0) scale(-1,1)"><path d="M9.5 1.5 L14.5 6.5 L12.8 7 L10.5 9.5 L10.8 12.2 L9.8 13.2 L2.8 6.2 L3.8 5.2 L6.5 5.5 L9 3.2 Z" fill="none" stroke="#2b2f36" stroke-width="1.1" stroke-linejoin="round"/><path d="M6.3 9.7 L1 15" stroke="#2b2f36" stroke-width="1.1" stroke-linecap="round"/></g></svg><div class="cb" style="left:17.5px;top:115.19px;background:#4b36b5"></div><svg class="a" style="left:17.5px;top:115.19px" width="21" height="21" viewBox="0 0 21 21"><path d="M5.3 10.6 L8.9 14 L15.6 7.2" fill="none" stroke="#fff" stroke-width="1.7" stroke-linecap="round" stroke-linejoin="round"/></svg><svg class="a" style="left:51.5px;top:120.99px" width="15" height="9" viewBox="0 0 15 9"><circle cx="1.3" cy="1.3" r="1.35" fill="#2b2f36"/><circle cx="1.3" cy="7.5" r="1.35" fill="#2b2f36"/><circle cx="6.8" cy="1.3" r="1.35" fill="#2b2f36"/><circle cx="6.8" cy="7.5" r="1.35" fill="#2b2f36"/><circle cx="12.3" cy="1.3" r="1.35" fill="#2b2f36"/><circle cx="12.3" cy="7.5" r="1.35" fill="#2b2f36"/></svg><div class="t ddt" style="left:82px;top:116.39px">Pendapatan Ko...</div><svg class="a" style="left:228px;top:116.69px" width="16" height="16" viewBox="0 0 16 16"><path d="M9.5 1.5 L14.5 6.5 L12.8 7 L10.5 9.5 L10.8 12.2 L9.8 13.2 L2.8 6.2 L3.8 5.2 L6.5 5.5 L9 3.2 Z" fill="none" stroke="#2b2f36" stroke-width="1.1" stroke-linejoin="round"/><path d="M6.3 9.7 L1 15" stroke="#2b2f36" stroke-width="1.1" stroke-linecap="round"/></svg><svg class="a" style="left:263.5px;top:116.69px" width="16" height="16" viewBox="0 0 16 16" ><g transform="translate(16,0) scale(-1,1)"><path d="M9.5 1.5 L14.5 6.5 L12.8 7 L10.5 9.5 L10.8 12.2 L9.8 13.2 L2.8 6.2 L3.8 5.2 L6.5 5.5 L9 3.2 Z" fill="none" stroke="#2b2f36" stroke-width="1.1" stroke-linejoin="round"/><path d="M6.3 9.7 L1 15" stroke="#2b2f36" stroke-width="1.1" stroke-linecap="round"/></g></svg><div class="cb" style="left:17.5px;top:150.51999999999998px;background:#4b36b5"></div><svg class="a" style="left:17.5px;top:150.51999999999998px" width="21" height="21" viewBox="0 0 21 21"><path d="M5.3 10.6 L8.9 14 L15.6 7.2" fill="none" stroke="#fff" stroke-width="1.7" stroke-linecap="round" stroke-linejoin="round"/></svg><svg class="a" style="left:51.5px;top:156.32px" width="15" height="9" viewBox="0 0 15 9"><circle cx="1.3" cy="1.3" r="1.35" fill="#2b2f36"/><circle cx="1.3" cy="7.5" r="1.35" fill="#2b2f36"/><circle cx="6.8" cy="1.3" r="1.35" fill="#2b2f36"/><circle cx="6.8" cy="7.5" r="1.35" fill="#2b2f36"/><circle cx="12.3" cy="1.3" r="1.35" fill="#2b2f36"/><circle cx="12.3" cy="7.5" r="1.35" fill="#2b2f36"/></svg><div class="t ddt" style="left:82px;top:151.71999999999997px">Harga Subsidi ...</div><svg class="a" style="left:228px;top:152.02px" width="16" height="16" viewBox="0 0 16 16"><path d="M9.5 1.5 L14.5 6.5 L12.8 7 L10.5 9.5 L10.8 12.2 L9.8 13.2 L2.8 6.2 L3.8 5.2 L6.5 5.5 L9 3.2 Z" fill="none" stroke="#2b2f36" stroke-width="1.1" stroke-linejoin="round"/><path d="M6.3 9.7 L1 15" stroke="#2b2f36" stroke-width="1.1" stroke-linecap="round"/></svg><svg class="a" style="left:263.5px;top:152.02px" width="16" height="16" viewBox="0 0 16 16" ><g transform="translate(16,0) scale(-1,1)"><path d="M9.5 1.5 L14.5 6.5 L12.8 7 L10.5 9.5 L10.8 12.2 L9.8 13.2 L2.8 6.2 L3.8 5.2 L6.5 5.5 L9 3.2 Z" fill="none" stroke="#2b2f36" stroke-width="1.1" stroke-linejoin="round"/><path d="M6.3 9.7 L1 15" stroke="#2b2f36" stroke-width="1.1" stroke-linecap="round"/></g></svg><div class="cb" style="left:17.5px;top:185.8499999999999px;background:#4b36b5"></div><svg class="a" style="left:17.5px;top:185.8499999999999px" width="21" height="21" viewBox="0 0 21 21"><path d="M5.3 10.6 L8.9 14 L15.6 7.2" fill="none" stroke="#fff" stroke-width="1.7" stroke-linecap="round" stroke-linejoin="round"/></svg><svg class="a" style="left:51.5px;top:191.64999999999992px" width="15" height="9" viewBox="0 0 15 9"><circle cx="1.3" cy="1.3" r="1.35" fill="#2b2f36"/><circle cx="1.3" cy="7.5" r="1.35" fill="#2b2f36"/><circle cx="6.8" cy="1.3" r="1.35" fill="#2b2f36"/><circle cx="6.8" cy="7.5" r="1.35" fill="#2b2f36"/><circle cx="12.3" cy="1.3" r="1.35" fill="#2b2f36"/><circle cx="12.3" cy="7.5" r="1.35" fill="#2b2f36"/></svg><div class="t ddt" style="left:82px;top:187.0499999999999px">Penjualan Prod...</div><svg class="a" style="left:228px;top:187.35px" width="16" height="16" viewBox="0 0 16 16"><path d="M9.5 1.5 L14.5 6.5 L12.8 7 L10.5 9.5 L10.8 12.2 L9.8 13.2 L2.8 6.2 L3.8 5.2 L6.5 5.5 L9 3.2 Z" fill="none" stroke="#2b2f36" stroke-width="1.1" stroke-linejoin="round"/><path d="M6.3 9.7 L1 15" stroke="#2b2f36" stroke-width="1.1" stroke-linecap="round"/></svg><svg class="a" style="left:263.5px;top:187.35px" width="16" height="16" viewBox="0 0 16 16" ><g transform="translate(16,0) scale(-1,1)"><path d="M9.5 1.5 L14.5 6.5 L12.8 7 L10.5 9.5 L10.8 12.2 L9.8 13.2 L2.8 6.2 L3.8 5.2 L6.5 5.5 L9 3.2 Z" fill="none" stroke="#2b2f36" stroke-width="1.1" stroke-linejoin="round"/><path d="M6.3 9.7 L1 15" stroke="#2b2f36" stroke-width="1.1" stroke-linecap="round"/></g></svg><div class="cb" style="left:17.5px;top:221.17999999999995px;background:#4b36b5"></div><svg class="a" style="left:17.5px;top:221.17999999999995px" width="21" height="21" viewBox="0 0 21 21"><path d="M5.3 10.6 L8.9 14 L15.6 7.2" fill="none" stroke="#fff" stroke-width="1.7" stroke-linecap="round" stroke-linejoin="round"/></svg><svg class="a" style="left:51.5px;top:226.97999999999996px" width="15" height="9" viewBox="0 0 15 9"><circle cx="1.3" cy="1.3" r="1.35" fill="#2b2f36"/><circle cx="1.3" cy="7.5" r="1.35" fill="#2b2f36"/><circle cx="6.8" cy="1.3" r="1.35" fill="#2b2f36"/><circle cx="6.8" cy="7.5" r="1.35" fill="#2b2f36"/><circle cx="12.3" cy="1.3" r="1.35" fill="#2b2f36"/><circle cx="12.3" cy="7.5" r="1.35" fill="#2b2f36"/></svg><div class="t ddt" style="left:82px;top:222.37999999999994px">Harga Awal Pr...</div><svg class="a" style="left:228px;top:222.68px" width="16" height="16" viewBox="0 0 16 16"><path d="M9.5 1.5 L14.5 6.5 L12.8 7 L10.5 9.5 L10.8 12.2 L9.8 13.2 L2.8 6.2 L3.8 5.2 L6.5 5.5 L9 3.2 Z" fill="none" stroke="#2b2f36" stroke-width="1.1" stroke-linejoin="round"/><path d="M6.3 9.7 L1 15" stroke="#2b2f36" stroke-width="1.1" stroke-linecap="round"/></svg><svg class="a" style="left:263.5px;top:222.68px" width="16" height="16" viewBox="0 0 16 16" ><g transform="translate(16,0) scale(-1,1)"><path d="M9.5 1.5 L14.5 6.5 L12.8 7 L10.5 9.5 L10.8 12.2 L9.8 13.2 L2.8 6.2 L3.8 5.2 L6.5 5.5 L9 3.2 Z" fill="none" stroke="#2b2f36" stroke-width="1.1" stroke-linejoin="round"/><path d="M6.3 9.7 L1 15" stroke="#2b2f36" stroke-width="1.1" stroke-linecap="round"/></g></svg><div class="cb" style="left:17.5px;top:256.51px;background:#4b36b5"></div><svg class="a" style="left:17.5px;top:256.51px" width="21" height="21" viewBox="0 0 21 21"><path d="M5.3 10.6 L8.9 14 L15.6 7.2" fill="none" stroke="#fff" stroke-width="1.7" stroke-linecap="round" stroke-linejoin="round"/></svg><svg class="a" style="left:51.5px;top:262.31px" width="15" height="9" viewBox="0 0 15 9"><circle cx="1.3" cy="1.3" r="1.35" fill="#2b2f36"/><circle cx="1.3" cy="7.5" r="1.35" fill="#2b2f36"/><circle cx="6.8" cy="1.3" r="1.35" fill="#2b2f36"/><circle cx="6.8" cy="7.5" r="1.35" fill="#2b2f36"/><circle cx="12.3" cy="1.3" r="1.35" fill="#2b2f36"/><circle cx="12.3" cy="7.5" r="1.35" fill="#2b2f36"/></svg><div class="t ddt" style="left:82px;top:257.71px">Penjualan</div><svg class="a" style="left:228px;top:258.01px" width="16" height="16" viewBox="0 0 16 16"><path d="M9.5 1.5 L14.5 6.5 L12.8 7 L10.5 9.5 L10.8 12.2 L9.8 13.2 L2.8 6.2 L3.8 5.2 L6.5 5.5 L9 3.2 Z" fill="none" stroke="#2b2f36" stroke-width="1.1" stroke-linejoin="round"/><path d="M6.3 9.7 L1 15" stroke="#2b2f36" stroke-width="1.1" stroke-linecap="round"/></svg><svg class="a" style="left:263.5px;top:258.01px" width="16" height="16" viewBox="0 0 16 16" ><g transform="translate(16,0) scale(-1,1)"><path d="M9.5 1.5 L14.5 6.5 L12.8 7 L10.5 9.5 L10.8 12.2 L9.8 13.2 L2.8 6.2 L3.8 5.2 L6.5 5.5 L9 3.2 Z" fill="none" stroke="#2b2f36" stroke-width="1.1" stroke-linejoin="round"/><path d="M6.3 9.7 L1 15" stroke="#2b2f36" stroke-width="1.1" stroke-linecap="round"/></g></svg><div class="a" style="left:306px;top:0;width:9.5px;height:266px;background:#f4f5f7"></div><div class="a" style="left:306px;top:0;width:9.5px;height:152px;border-radius:5px;background:#a9adb6"></div></div>
<div class="a" style="left:1549.5px;top:644.8px;width:316px;height:1px;background:#dcdfe6"></div>
<div class="t ddt" style="left:1559px;top:661px">Kembalikan ke D...</div>
<div class="t ddt" style="left:1717px;top:661px">Batal...</div>
<div class="t ddt" style="left:1789px;top:661px;color:#4b36b5">Konfir...</div>
</div>

<svg class="a" style="left:1883px;top:421px" width="12" height="18" viewBox="0 0 12 18"><circle cx="9" cy="9" r="7.5" fill="none" stroke="#4b36b5" stroke-width="2"/></svg>
<div class="a" style="left:1860.5px;top:689.5px;width:43px;height:43px;border-radius:50%;background:#fff;box-shadow:0 0 6px rgba(0,0,0,0.07)"></div>
<svg class="a" style="left:1868px;top:696px" width="26" height="26" viewBox="0 0 26 26"><path d="M4.3 7.4 H22.6" stroke="#1463f3" stroke-width="1.6" stroke-linecap="round"/><path d="M13.4 5.2 V7.4" stroke="#1463f3" stroke-width="1.6" stroke-linecap="round"/><path d="M5.7 7.4 H21 V17.4 Q21 18.7 19.7 18.7 H7 Q5.7 18.7 5.7 17.4 Z" fill="#1463f3"/><path d="M9.4 11.1 H13.9 M9.4 14.4 H17.4" stroke="#fff" stroke-width="1.4" stroke-linecap="round"/><path d="M9.6 19 L7.4 21.4 M16.8 19 L19.1 21.4" stroke="#1463f3" stroke-width="1.7" stroke-linecap="round"/></svg>
<div class="a" style="left:1860.5px;top:761.5px;width:43px;height:43px;border-radius:50%;background:#fff;box-shadow:0 0 6px rgba(0,0,0,0.07)"></div>
<svg class="a" style="left:1872px;top:773px" width="19" height="19" viewBox="0 0 19 19"><defs><linearGradient id="sg" x1="0" y1="0" x2="0.9" y2="0.9"><stop offset="0" stop-color="#12d0d6"/><stop offset="0.45" stop-color="#1a8cf0"/><stop offset="1" stop-color="#1a5cf2"/></linearGradient></defs><path d="M0 0 H10 C15 0 19 4 19 9.5 C19 14.8 14.8 19 9.5 19 C4.2 19 0 14.8 0 9.5 Z" fill="url(#sg)"/><path d="M5.6 11.6 Q9.5 16 13.4 11.6" fill="none" stroke="#fff" stroke-width="1.7" stroke-linecap="round"/><path d="M4.3 8.4 Q5.9 6.3 7.5 8.4 M11.5 8.4 Q13.1 6.3 14.7 8.4" fill="none" stroke="#fff" stroke-width="1.5" stroke-linecap="round"/></svg>
<svg class="a" style="left:1859px;top:635px;z-index:20" width="46" height="46" viewBox="0 0 46 46"><defs><clipPath id="avc"><circle cx="23" cy="22.5" r="20.2"/></clipPath><linearGradient id="avr" x1="0" y1="0" x2="0" y2="1"><stop offset="0" stop-color="#1668f2"/><stop offset="1" stop-color="#17c3f6"/></linearGradient></defs>
<g clip-path="url(#avc)"><rect x="0" y="0" width="46" height="46" fill="#c3c6cb"/>
<path d="M8 46 L9 36 C11 31 16 29.5 23 29.5 C30 29.5 36 31 38 36 L39 46 Z" fill="#4a4a50"/>
<path d="M18 29.5 L23 42 L28 29.5 Z" fill="#eeeeee"/><path d="M22 32 L24 32 L25 44 L21 44 Z" fill="#202024"/>
<path d="M14.5 24 C13 28 12.5 33 14 38 L17.5 36 C16.5 32 17 28 18 25 Z" fill="#3b2c26"/>
<ellipse cx="23.5" cy="15.5" rx="9.2" ry="10.2" fill="#2b2322"/>
<ellipse cx="23.5" cy="19" rx="7" ry="8.6" fill="#ecd0c2"/>
<path d="M15 12 C17 7 21 6.5 24 6.5 C28 6.5 31.5 8.5 32.5 13 C29 11 26 10.5 22 11.5 C19 12 17 13 15 14 Z" fill="#2b2322"/>
<path d="M14.2 16 L14.2 23 M32.8 16 L32.8 23" stroke="#1e1e1e" stroke-width="2.2"/>
<path d="M24 24.5 Q28 24 31 22" fill="none" stroke="#222" stroke-width="0.9"/>
<path d="M21 23.2 Q23.5 24.6 26 23.2" fill="none" stroke="#c8707a" stroke-width="1"/>
</g><circle cx="23" cy="22.5" r="20.6" fill="none" stroke="url(#avr)" stroke-width="2.6"/></svg>
</body></html>
